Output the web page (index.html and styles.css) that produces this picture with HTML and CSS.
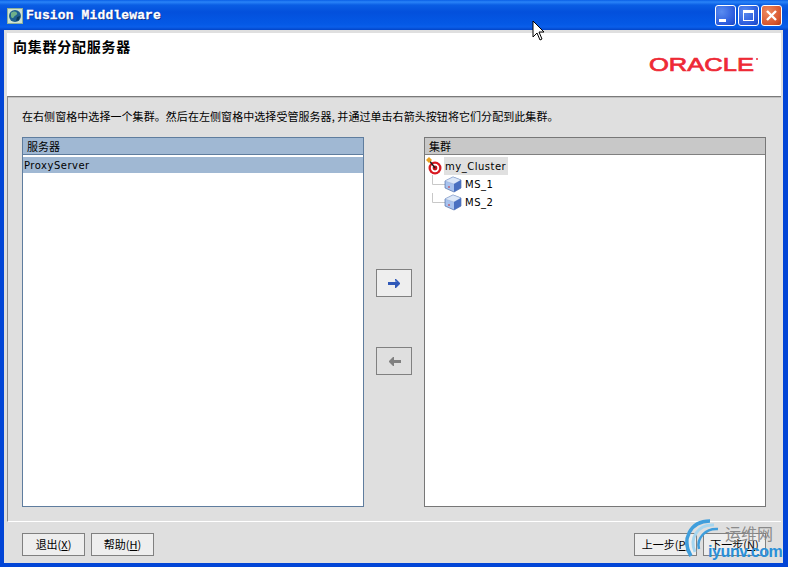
FILE: index.html
```html
<!DOCTYPE html>
<html lang="zh">
<head>
<meta charset="utf-8">
<title>Fusion Middleware</title>
<link rel="stylesheet" href="styles.css">
</head>
<body>
<div class="window">
  <div class="titlebar">
    <svg class="appicon" width="16" height="16" viewBox="0 0 16 16"><rect x="0.5" y="0.5" width="15" height="15" fill="#cfe3cf" stroke="#8fb09a"/><circle cx="8" cy="8" r="6" fill="#1f5f8f"/><path d="M4 5c2-2 5-2 6 0s-2 2-3 4-3 1-3-1z" fill="#6fb08a"/><path d="M10 9l3-1-1 4-3 1z" fill="#0e3a5a"/></svg>
    <span class="title">Fusion Middleware</span>
    <div class="winbtns">
      <div class="winbtn blue"><span class="min"></span></div>
      <div class="winbtn blue"><span class="max"></span></div>
      <div class="winbtn red"><svg width="13" height="13" viewBox="0 0 13 13"><path d="M2 2l9 9M11 2l-9 9" stroke="#fff" stroke-width="2.4"/></svg></div>
    </div>
  </div>
  <div class="client">
    <header class="head">
      <h1>向集群分配服务器</h1>
      <svg class="oracle" width="114" height="22" viewBox="0 0 114 22"><text x="0" y="17" textLength="105" lengthAdjust="spacingAndGlyphs" class="oracle-text">ORACLE</text><circle cx="108" cy="5" r="1" fill="#ee2a36"/></svg>
    </header>
    <main class="panel">
      <p class="intro">在右侧窗格中选择一个集群。然后在左侧窗格中选择受管服务器, 并通过单击右箭头按钮将它们分配到此集群。</p>
      <div class="columns">
        <section class="list">
          <div class="list-head active">服务器</div>
          <div class="list-body">
            <div class="row-selected">ProxyServer</div>
          </div>
        </section>
        <div class="movers">
          <button class="move"><svg width="13" height="9" viewBox="0 0 13 9"><path d="M0 3h7V0h1l4 4v1l-4 4H7V6H0z" fill="#2f58b8"/><path d="M0 3h7V1l2 2z" fill="#7fa0e0"/></svg></button>
          <button class="move off"><svg width="13" height="9" viewBox="0 0 13 9"><path d="M13 3H6V0H5L1 4v1l4 4h1V6h7z" fill="#808080"/></svg></button>
        </div>
        <section class="list">
          <div class="list-head">集群</div>
          <div class="list-body tree">
            <div class="tree-root">
              <svg width="19" height="18" viewBox="0 0 19 18"><circle cx="10" cy="11" r="6.5" fill="#d81820"/><circle cx="10" cy="11" r="4.2" fill="#fff"/><circle cx="10" cy="11" r="2.4" fill="#c01018"/><path d="M4 3l6 8" stroke="#1c1c1c" stroke-width="1.4"/><path d="M1 3l3-3 3 3-3 3z" fill="#e8a020"/></svg>
              <span class="tree-label selected">my_Cluster</span>
            </div>
            <div class="tree-child">
              <svg width="39" height="18" viewBox="0 0 39 18"><path d="M7.5 0v9.5H20" stroke="#c8c8c8" fill="none"/><path d="M20 6l8-4 8 3v8l-7 4-9-4z" fill="#a9c3ee" stroke="#3a5a9c" stroke-width=".6"/><path d="M20 6l8-4 8 3-7 4z" fill="#dde8f8" stroke="#8aa4d0" stroke-width=".4"/><path d="M29 9l7-4v8l-7 4z" fill="#4a70c0"/><circle cx="24" cy="12" r=".8" fill="#d02020"/></svg>
              <span class="tree-label">MS_1</span>
            </div>
            <div class="tree-child">
              <svg width="39" height="18" viewBox="0 0 39 18"><path d="M7.5 0v9.5H20" stroke="#c8c8c8" fill="none"/><path d="M20 6l8-4 8 3v8l-7 4-9-4z" fill="#a9c3ee" stroke="#3a5a9c" stroke-width=".6"/><path d="M20 6l8-4 8 3-7 4z" fill="#dde8f8" stroke="#8aa4d0" stroke-width=".4"/><path d="M29 9l7-4v8l-7 4z" fill="#4a70c0"/><circle cx="24" cy="12" r=".8" fill="#d02020"/></svg>
              <span class="tree-label">MS_2</span>
            </div>
          </div>
        </section>
      </div>
    </main>
    <footer class="foot">
      <button class="btn">退出(<u>X</u>)</button>
      <button class="btn">帮助(<u>H</u>)</button>
      <span class="spacer"></span>
      <button class="btn">上一步(<u>P</u>)</button>
      <button class="btn">下一步(<u>N</u>)</button>
    </footer>
  </div>
  <svg class="cursor" width="14" height="22" viewBox="0 0 14 22"><path d="M1 1v16l4-4 3 7 2-1-3-7h5z" fill="#fff" stroke="#000"/></svg>
  <div class="mark">
    <svg class="mark-arcs" width="50" height="47" viewBox="0 0 50 47"><path d="M26 1C6 1-3 20 7 36" fill="none" stroke="#3f9edc" stroke-width="3.5"/><path d="M30 5C14 4 5 18 11 32" fill="none" stroke="#a6d6f0" stroke-width="3"/><path d="M34 9C22 8 12 18 15 29" fill="none" stroke="#3f9edc" stroke-width="2.5"/></svg>
    <span class="mark-cn">运维网</span>
    <span class="mark-en">iyunv.com</span>
  </div>
</div>
</body>
</html>
```
FILE: styles.css
```css
* { box-sizing: border-box; }
html, body { margin: 0; padding: 0; }
body { width: 788px; height: 567px; overflow: hidden; font-family: "Noto Sans CJK SC", "Liberation Sans", sans-serif; }
.window { position: relative; width: 788px; height: 567px; display: flex; flex-direction: column; background: #0245d6; overflow: hidden; }
.titlebar { height: 30px; flex: none; display: flex; align-items: center; padding: 1px 6px 0 7px; gap: 3px; background: linear-gradient(180deg, #0a5fe6 0, #2a84f8 2px, #0a5ee4 5px, #0350dc 12px, #0459e6 24px, #0a5eea 27px, #0245c8 30px); }
.appicon { flex: none; }
.title { font: bold 13px "Liberation Mono", monospace; color: #fff; letter-spacing: 0.14px; text-shadow: 1px 1px 0 #0a2a80; -webkit-text-stroke: 0.3px #fff; }
.winbtns { margin-left: auto; display: flex; gap: 2px; }
.winbtn { width: 21px; height: 21px; border: 1px solid #fff; border-radius: 3px; position: relative; display: flex; align-items: center; justify-content: center; }
.winbtn.blue { background: radial-gradient(circle at 30% 30%, #5a8cf0, #2a5adc 70%, #1a46c0); }
.winbtn.red { background: radial-gradient(circle at 30% 30%, #ee8a60, #d8562e 70%, #b23a18); }
.min { width: 7px; height: 3px; background: #fff; margin: 9px 6px 0 0; }
.max { width: 11px; height: 11px; border: 1px solid #fff; border-top-width: 3px; }
.client { flex: 1; margin: 0 5px 4px 4px; padding: 3px 2px 0 3px; background: #dfdfdf; display: flex; flex-direction: column; min-height: 0; }
.head { height: 63px; flex: none; background: #fff; padding: 3px 6px; position: relative; }
h1 { margin: 0; font-size: 14px; font-weight: 700; line-height: 20px; letter-spacing: 0.75px; color: #000; }
.oracle { position: absolute; left: 642px; top: 21px; }
.oracle-text { font: 19px "Liberation Sans", sans-serif; fill: #ee2a36; stroke: #ee2a36; stroke-width: 0.7px; }
.panel { height: 426px; flex: none; border-top: 1px solid #7a7a7a; border-left: 1px solid #8c8c8c; border-bottom: 1px solid #fff; padding: 11px 14px 14px; display: flex; flex-direction: column; box-shadow: inset 0 1px 0 #c0c0c0; }
.intro { margin: 0 0 12px; font-size: 11px; line-height: 17px; color: #000; white-space: nowrap; letter-spacing: 0.06px; }
.columns { flex: 1; display: grid; grid-template-columns: 342px 60px 342px; min-height: 0; }
.list { display: flex; flex-direction: column; border: 1px solid #5f7d9e; background: #fff; }
.list + .movers + .list { border-color: #777; }
.list-head { height: 17px; flex: none; background: #c8c8c8; font-size: 11px; line-height: 16px; padding-left: 4px; border-bottom: 1px solid #808080; color: #000; }
.list-head.active { background: #a0b8d3; border-bottom-color: #5f7d9e; }
.list-body { flex: 1; padding-top: 2px; font: 10px "DejaVu Sans", sans-serif; letter-spacing: 0.5px; color: #000; }
.row-selected { height: 16px; line-height: 18px; background: #a0b8d3; padding-left: 1px; }
.movers { display: flex; flex-direction: column; align-items: center; padding-top: 132px; gap: 50px; }
.move { width: 36px; height: 28px; padding: 0; background: #eeeeee; border: 1px solid #808080; display: flex; align-items: center; justify-content: center; }
.move.off { background: #dfdfdf; }
.tree { padding-top: 2px; }
.tree-root { height: 18px; display: flex; align-items: center; }
.tree-child { height: 18px; display: flex; align-items: center; }
.tree-child svg { flex: none; }
.tree-root svg { flex: none; }
.tree-label { height: 18px; line-height: 20px; padding: 0 1px; }
.tree-label.selected { background: #e0e0e0; padding: 0 2px 0 1px; }
.foot { flex: 1; display: flex; align-items: flex-start; gap: 6px; padding: 11px 15px 0 15px; min-height: 0; }
.spacer { flex: 1; }
.btn { width: 63px; height: 23px; padding: 0 0 2px; background: #eeeeee; border: 1px solid #808080; font: 11px "Noto Sans CJK SC", "Liberation Sans", sans-serif; color: #000; white-space: nowrap; }
.cursor { position: absolute; left: 532px; top: 20px; }
.mark { position: absolute; left: 684px; top: 520px; width: 104px; height: 47px; }
.mark-arcs { position: absolute; left: 0; top: 0; overflow: visible; }
.mark-cn { position: absolute; left: 41px; top: 3px; font-size: 16px; line-height: 20px; color: #8a8a8a; }
.mark-en { position: absolute; left: 24px; top: 22px; font: bold 16px "Liberation Sans", sans-serif; letter-spacing: -0.4px; line-height: 20px; color: #2a8fd8; }
```
